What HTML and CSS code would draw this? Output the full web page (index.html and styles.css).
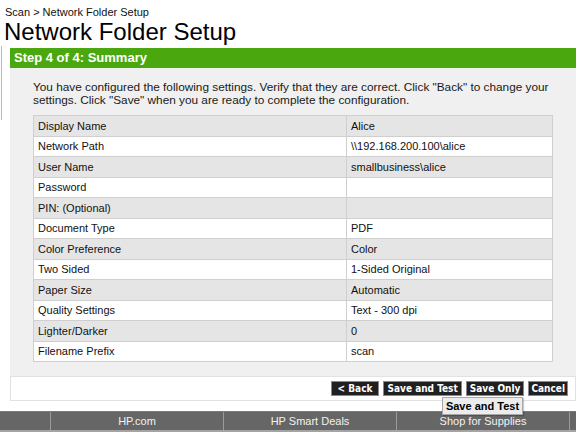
FILE: index.html
```html
<!DOCTYPE html>
<html>
<head>
<meta charset="utf-8">
<link rel="stylesheet" href="styles.css">
</head>
<body>
<div class="page">
  <div class="edge-line"></div>
  <div class="crumb">Scan &gt; Network Folder Setup</div>
  <h1 class="title">Network Folder Setup</h1>
  <div class="panel">
    <div class="step">Step 4 of 4: Summary</div>
    <div class="panel-body">
      <p class="intro">You have configured the following settings. Verify that they are correct. Click "Back" to change your settings. Click "Save" when you are ready to complete the configuration.</p>
      <table class="summary">
        <tr class="odd"><td class="k">Display Name</td><td>Alice</td></tr>
        <tr><td class="k">Network Path</td><td>\\192.168.200.100\alice</td></tr>
        <tr class="odd"><td class="k">User Name</td><td>smallbusiness\alice</td></tr>
        <tr><td class="k">Password</td><td></td></tr>
        <tr class="odd"><td class="k">PIN: (Optional)</td><td></td></tr>
        <tr><td class="k">Document Type</td><td>PDF</td></tr>
        <tr class="odd"><td class="k">Color Preference</td><td>Color</td></tr>
        <tr><td class="k">Two Sided</td><td>1-Sided Original</td></tr>
        <tr class="odd"><td class="k">Paper Size</td><td>Automatic</td></tr>
        <tr><td class="k">Quality Settings</td><td>Text - 300 dpi</td></tr>
        <tr class="odd"><td class="k">Lighter/Darker</td><td>0</td></tr>
        <tr><td class="k">Filename Prefix</td><td>scan</td></tr>
      </table>
    </div>
    <div class="actions">
      <button class="btn btn-back">&lt; Back</button>
      <button class="btn">Save and Test</button>
      <button class="btn">Save Only</button>
      <button class="btn btn-cancel">Cancel</button>
      <div class="tooltip">Save and Test</div>
    </div>
  </div>
  <div class="footer">
    <div class="fcell"></div>
    <div class="fcell">HP.com</div>
    <div class="fcell">HP Smart Deals</div>
    <div class="fcell">Shop for Supplies</div>
    <div class="fcell"></div>
  </div>
</div>
</body>
</html>
```
FILE: styles.css
```css
html, body {
  margin: 0;
  padding: 0;
  background: #ffffff;
  overflow: hidden;
}
body {
  font-family: "Liberation Sans", Arial, sans-serif;
  color: #111;
  width: 576px;
  height: 436px;
}
.page {
  position: relative;
  padding-top: 6px;
}
.edge-line {
  position: absolute;
  left: 1px;
  top: 46px;
  width: 1px;
  height: 74px;
  background: #b8b8b8;
}
.crumb {
  font-size: 11px;
  line-height: 13px;
  padding-left: 5px;
}
.title {
  margin: 0;
  font-weight: normal;
  font-size: 24px;
  line-height: 26px;
  padding-left: 4px;
  color: #000;
}
.panel {
  margin: 3px 0 0 10px;
}
.step {
  background: #4aa80e;
  color: #fff;
  font-weight: bold;
  font-size: 13px;
  line-height: 20px;
  height: 20px;
  padding-left: 4px;
}
.panel-body {
  background: #eff0ef;
  padding: 13px 23px 14px 23px;
}
.intro {
  margin: 0 0 8px 0;
  font-size: 11.8px;
  line-height: 13px;
  color: #1a1a1a;
  width: 535px;
}
.summary {
  width: 520px;
  border-collapse: collapse;
  font-size: 11px;
  color: #111;
  border: 1px solid #cfcfcf;
}
.summary td {
  height: 19.5px;
  padding: 0 0 0 4px;
  border: 1px solid #cfcfcf;
  vertical-align: middle;
  background: #ffffff;
}
.summary tr.odd td {
  background: #e5e5e5;
}
.summary td.k {
  width: 308px;
}
.actions {
  position: relative;
  display: flex;
  justify-content: flex-end;
  gap: 4px;
  background: #fff;
  border: 1px solid #e2e2e2;
  padding: 4px 7px 4px 0;
  height: 15px;
}
.btn {
  font-family: "DejaVu Sans Condensed", "DejaVu Sans", Verdana, sans-serif;
  font-stretch: condensed;
  font-weight: bold;
  font-size: 10px;
  color: #fff;
  background: #202020;
  border: 1px solid #8a8a8a;
  height: 15px;
  line-height: 13px;
  padding: 0 3px;
  margin: 0;
  border-radius: 0;
}
.btn-back {
  padding: 0 6px;
}
.btn-cancel {
  padding: 0 2px;
}
.tooltip {
  position: absolute;
  left: 431px;
  top: 20px;
  width: 79px;
  height: 16px;
  background: #ececec;
  border: 1px solid #a8a8a8;
  font-size: 11px;
  font-weight: bold;
  line-height: 16px;
  text-align: center;
  color: #000;
  z-index: 2;
  box-shadow: 1px 1px 1px rgba(0,0,0,0.2);
}
.footer {
  margin-top: 10px;
  display: grid;
  grid-template-columns: 51px 173px 173px 173px 1fr;
  background: #666666;
  border-top: 1px solid #7a7a7a;
  border-bottom: 2px solid #a4a4a4;
  height: 18px;
}
.fcell {
  border-right: 1px solid #9a9a9a;
  color: #f2f2f2;
  font-size: 11px;
  line-height: 18px;
  text-align: center;
}
.fcell:last-child {
  border-right: none;
}
```
